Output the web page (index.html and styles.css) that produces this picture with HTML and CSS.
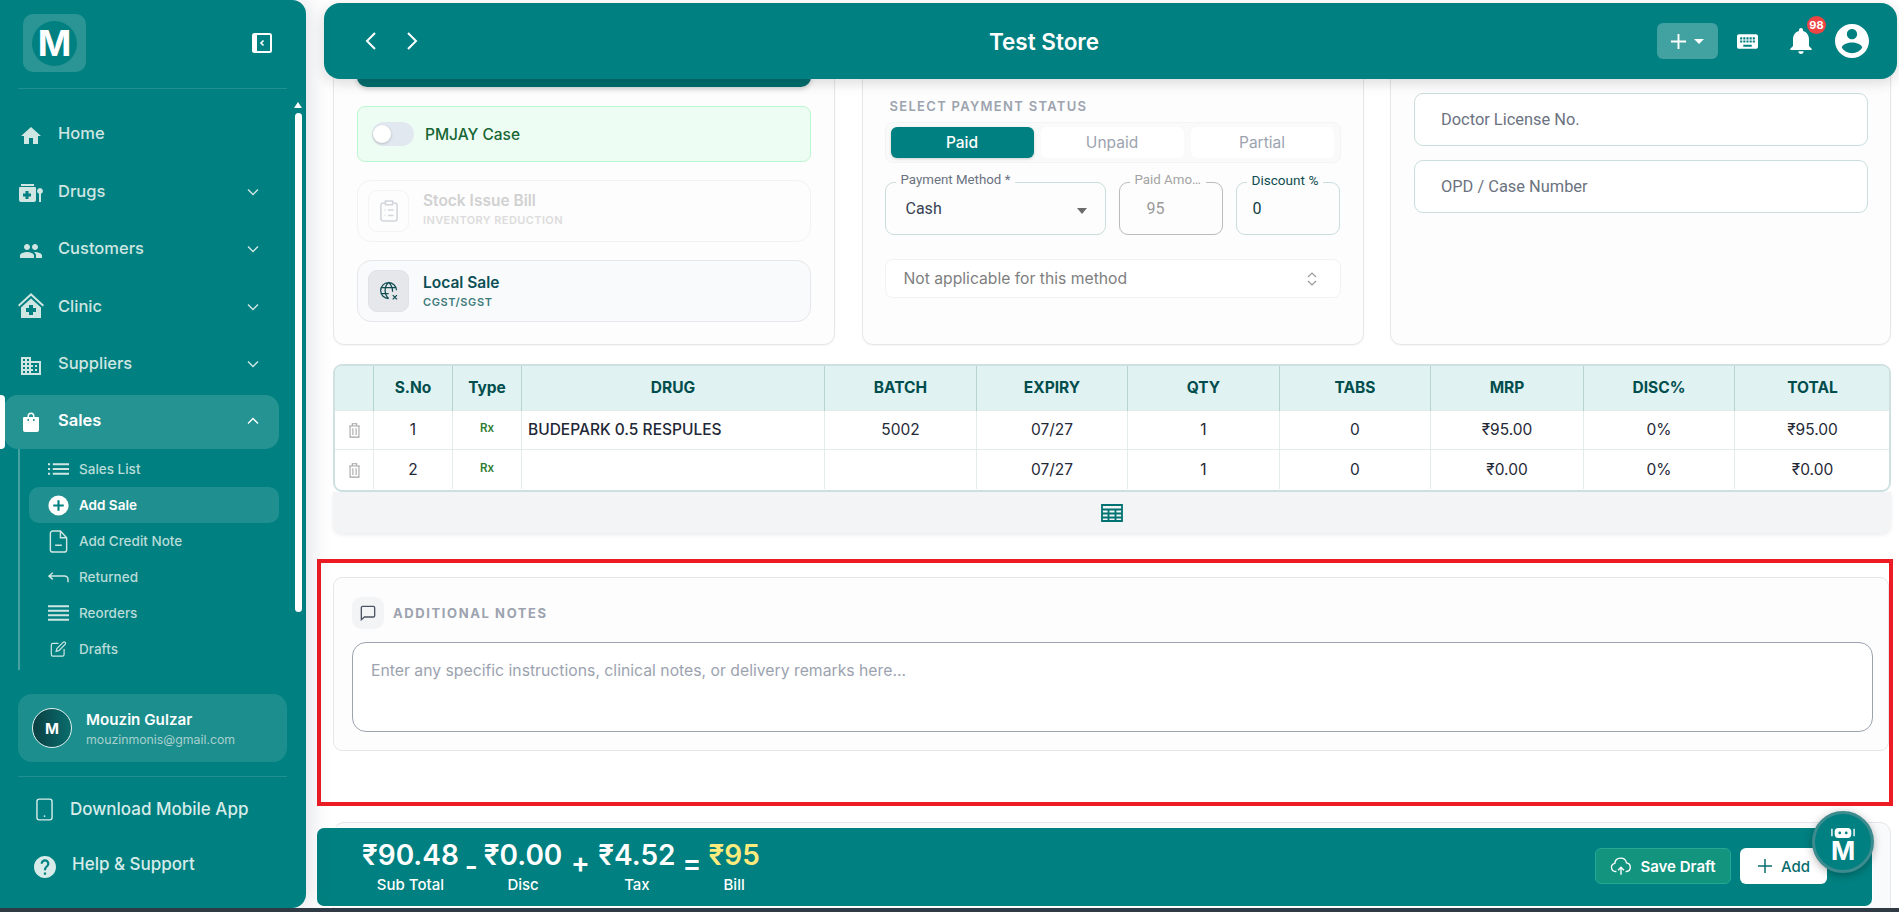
FILE: index.html
```html
<!DOCTYPE html>
<html>

<head>
  <meta charset="UTF-8">
  <title>Add Sale</title>
  <link rel="stylesheet" href="styles.css">
</head>

<body>
  <div class="app">
    <aside class="sidebar">
      <div class="sidebar__top">
        <div class="logo">
          <div class="logo__circle">M</div>
        </div>
        <svg class="sidebar__collapse" viewBox="0 0 20 20">
          <rect x="0" y="0" width="20" height="20" rx="2.5" fill="#fff" />
          <rect x="5" y="2" width="13" height="16" fill="#008080" />
          <path d="M11.5 7.5 9 10l2.5 2.5" fill="none" stroke="#fff" stroke-width="1.6" />
        </svg>
      </div>

      <div class="scroll-arrow"></div>
      <div class="scroll-thumb"></div>

      <nav class="nav">
        <a class="nav__item">
          <svg class="nav__icon" viewBox="0 0 24 24"><path d="M10 20v-6h4v6h5v-8h3L12 3 2 12h3v8z" /></svg>
          <span>Home</span>
        </a>
        <a class="nav__item">
          <svg class="nav__icon" viewBox="0 0 24 24"><path d="M2 3h13v2H2zM1 6h15a1 1 0 0 1 1 1v12a2 2 0 0 1-2 2H2a2 2 0 0 1-2-2V7a1 1 0 0 1 1-1zm5.500 4v2.500H4v3h2.500V18h3v-2.500H12v-3H9.500V10z" fill-rule="evenodd" /><path d="M21 7a3 3 0 0 1 1 5.800V21h-2v-8.200A3 3 0 0 1 21 7z" /></svg>
          <span>Drugs</span>
          <svg class="nav__chevron" viewBox="0 0 12 8"><path d="M1 1.500 6 6.500l5-5" /></svg>
        </a>
        <a class="nav__item">
          <svg class="nav__icon" viewBox="0 0 24 24"><path d="M16 11c1.660 0 2.990-1.340 2.990-3S17.660 5 16 5c-1.660 0-3 1.340-3 3s1.340 3 3 3zm-8 0c1.660 0 2.990-1.340 2.990-3S9.660 5 8 5C6.340 5 5 6.340 5 8s1.340 3 3 3zm0 2c-2.330 0-7 1.170-7 3.500V19h14v-2.500c0-2.330-4.670-3.500-7-3.500zm8 0c-.29 0-.62.02-.97.05 1.160.84 1.970 1.970 1.970 3.450V19h6v-2.500c0-2.330-4.670-3.500-7-3.500z" /></svg>
          <span>Customers</span>
          <svg class="nav__chevron" viewBox="0 0 12 8"><path d="M1 1.500 6 6.500l5-5" /></svg>
        </a>
        <a class="nav__item">
          <svg class="nav__icon nav__icon--big" viewBox="0 0 28 28"><path d="M14 1 1 13l1.300 1.500L14 3.800l11.700 10.700L27 13z" /><path d="M14 6.500 4 15.500V26h20V15.500zm-2 6.500h4v3h3v4h-3v3h-4v-3H9v-4h3z" fill-rule="evenodd" /></svg>
          <span>Clinic</span>
          <svg class="nav__chevron" viewBox="0 0 12 8"><path d="M1 1.500 6 6.500l5-5" /></svg>
        </a>
        <a class="nav__item">
          <svg class="nav__icon" viewBox="0 0 24 24"><path d="M12 7V3H2v18h20V7H12zM6 19H4v-2h2v2zm0-4H4v-2h2v2zm0-4H4V9h2v2zm0-4H4V5h2v2zm4 12H8v-2h2v2zm0-4H8v-2h2v2zm0-4H8V9h2v2zm0-4H8V5h2v2zm10 12h-8v-2h2v-2h-2v-2h2v-2h-2V9h8v10zm-2-8h-2v2h2v-2zm0 4h-2v2h2v-2z" /></svg>
          <span>Suppliers</span>
          <svg class="nav__chevron" viewBox="0 0 12 8"><path d="M1 1.500 6 6.500l5-5" /></svg>
        </a>
        <a class="nav__item nav__item--open">
          <svg class="nav__icon" viewBox="0 0 24 24"><path d="M5 7h3.500V6a3.500 3.500 0 0 1 7 0v1H19a1 1 0 0 1 1 1v12a2 2 0 0 1-2 2H6a2 2 0 0 1-2-2V8a1 1 0 0 1 1-1zm5 0h4V6a2 2 0 0 0-4 0zM8.500 9v2H10V9zm5.500 0v2h1.500V9z" fill-rule="evenodd" /></svg>
          <span>Sales</span>
          <svg class="nav__chevron" viewBox="0 0 12 8"><path d="M1 6.500 6 1.500l5 5" /></svg>
        </a>

        <div class="subnav">
          <a class="subnav__item">
            <svg class="subnav__icon" viewBox="0 0 22 14"><path d="M0 1h2.200v2H0zM5 1h17v2H5zM0 6h2.200v2H0zM5 6h17v2H5zM0 11h2.200v2H0zM5 11h17v2H5z" /></svg>
            <span>Sales List</span>
          </a>
          <a class="subnav__item subnav__item--active">
            <svg class="subnav__icon subnav__icon--add" viewBox="0 0 24 24"><circle cx="12" cy="12" r="11.500" fill="#fff" /><path d="M12 6v12M6 12h12" stroke="#008080" stroke-width="2.400" /></svg>
            <span>Add Sale</span>
          </a>
          <a class="subnav__item">
            <svg class="subnav__icon subnav__icon--line" viewBox="0 0 20 24"><path d="M12 1H4a2.500 2.500 0 0 0-2.500 2.500v17A2.500 2.500 0 0 0 4 23h12a2.500 2.500 0 0 0 2.500-2.500V8zM12 1v7h6.500M6.500 16h7" /></svg>
            <span>Add Credit Note</span>
          </a>
          <a class="subnav__item">
            <svg class="subnav__icon subnav__icon--line" viewBox="0 0 22 12"><path d="M5 1 1 4.500 5 8M1 4.500h16c2.500 0 4 1.500 4 4V11" /></svg>
            <span>Returned</span>
          </a>
          <a class="subnav__item">
            <svg class="subnav__icon" viewBox="0 0 22 16"><path d="M0 0h22v2H0zM0 4.700h22v2H0zM0 9.300h22v2H0zM0 14h22v2H0z" /></svg>
            <span>Reorders</span>
          </a>
          <a class="subnav__item">
            <svg class="subnav__icon subnav__icon--line subnav__icon--drafts" viewBox="0 0 20 20"><path d="M10 3H3a2 2 0 0 0-2 2v12a2 2 0 0 0 2 2h12a2 2 0 0 0 2-2v-7M16 1.500a1.800 1.800 0 0 1 2.500 2.500L10.500 12 7 13l1-3.500z" /></svg>
            <span>Drafts</span>
          </a>
        </div>
      </nav>

      <div class="profile">
        <div class="profile__avatar">M</div>
        <div>
          <div class="profile__name">Mouzin Gulzar</div>
          <div class="profile__mail">mouzinmonis@gmail.com</div>
        </div>
      </div>

      <div class="sidebar__bottom">
        <a class="bottom-link bottom-link--app">
          <svg class="bottom-link__phone" viewBox="0 0 18 24"><rect x="1" y="1" width="16" height="22" rx="2.500" /><circle cx="9" cy="19" r="1" /></svg>
          <span>Download Mobile App</span>
        </a>
        <a class="bottom-link bottom-link--help">
          <svg class="bottom-link__help" viewBox="2 2 20 20"><path d="M12 2C6.480 2 2 6.480 2 12s4.480 10 10 10 10-4.480 10-10S17.520 2 12 2zm1 17h-2v-2h2v2zm2.070-7.750l-.9.92C13.450 12.900 13 13.500 13 15h-2v-.5c0-1.100.45-2.100 1.170-2.830l1.240-1.260c.37-.36.59-.86.59-1.410 0-1.100-.9-2-2-2s-2 .9-2 2H8c0-2.210 1.790-4 4-4s4 1.790 4 4c0 .88-.36 1.680-.93 2.250z" /></svg>
          <span>Help &amp; Support</span>
        </a>
      </div>
    </aside>

    <main class="main">
      <header class="topbar">
        <div class="topbar__arrows">
          <svg viewBox="0 0 12 20"><path d="M10 2 2 10l8 8" /></svg>
          <svg viewBox="0 0 12 20"><path d="M2 2l8 8-8 8" /></svg>
        </div>
        <div class="topbar__title">Test Store</div>
        <div class="topbar__actions">
          <button class="plus-btn">
            <svg viewBox="0 0 18 18"><path d="M9 1v16M1 9h16" /></svg>
            <span class="plus-btn__caret"></span>
          </button>
          <svg class="topbar__keyboard" viewBox="2 5 20 14"><path d="M20 5H4c-1.100 0-1.990.9-1.990 2L2 17c0 1.100.9 2 2 2h16c1.100 0 2-.9 2-2V7c0-1.100-.9-2-2-2zm-9 3h2v2h-2V8zm0 3h2v2h-2v-2zM8 8h2v2H8V8zm0 3h2v2H8v-2zm-1 2H5v-2h2v2zm0-3H5V8h2v2zm9 7H8v-2h8v2zm0-4h-2v-2h2v2zm0-3h-2V8h2v2zm3 3h-2v-2h2v2zm0-3h-2V8h2v2z" /></svg>
          <div class="bell">
            <svg viewBox="4 2.500 16 19.500"><path d="M12 22c1.100 0 2-.9 2-2h-4c0 1.100.89 2 2 2zm6-6v-5c0-3.070-1.640-5.640-4.500-6.320V4c0-.83-.67-1.500-1.500-1.500s-1.500.67-1.500 1.500v.68C7.630 5.360 6 7.920 6 11v5l-2 2v1h16v-1l-2-2z" /></svg>
            <span class="bell__badge">98</span>
          </div>
          <svg class="topbar__avatar" viewBox="2 2 20 20"><path d="M12 2C6.480 2 2 6.480 2 12s4.480 10 10 10 10-4.480 10-10S17.520 2 12 2zm0 3c1.660 0 3 1.340 3 3s-1.340 3-3 3-3-1.340-3-3 1.340-3 3-3zm0 14.200c-2.500 0-4.710-1.280-6-3.220.03-1.990 4-3.080 6-3.080 1.990 0 5.970 1.090 6 3.080-1.290 1.940-3.500 3.220-6 3.220z" /></svg>
        </div>
      </header>

      <div class="content">
        <section class="top-cards">
          <div class="card card--options">
            <div class="dark-btn"></div>
            <div class="pmjay">
              <span class="toggle"></span>
              <span class="pmjay__label">PMJAY Case</span>
            </div>
            <div class="option option--disabled">
              <div class="option__icon">
                <svg viewBox="0 0 20 24"><path d="M6 3H3.500A2.500 2.500 0 0 0 1 5.500v15A2.500 2.500 0 0 0 3.500 23h13a2.500 2.500 0 0 0 2.500-2.500v-15A2.500 2.500 0 0 0 16.500 3H14M6 1h8v4H6zM9 11h6M9 17h6M5 11h1M5 17h1" /></svg>
              </div>
              <div class="option__text">
                <div class="option__title">Stock Issue Bill</div>
                <div class="option__sub">INVENTORY REDUCTION</div>
              </div>
            </div>
            <div class="option option--local">
              <div class="option__icon">
                <svg viewBox="0 0 24 24"><path d="M21 11a9.500 9.500 0 1 0-9.500 10M2.500 8h18M2.500 15h9M11.500 1.500c-5.500 5.500-5.500 14 0 19.500M11.500 1.500c3.500 3.500 5 7.500 4.800 11.500M16.500 17l5 5M21.500 17l-5 5" /></svg>
              </div>
              <div class="option__text">
                <div class="option__title">Local Sale</div>
                <div class="option__sub">CGST/SGST</div>
              </div>
            </div>
          </div>

          <div class="card card--payment">
            <div class="section-label">SELECT PAYMENT STATUS</div>
            <div class="segment">
              <div class="segment__btn segment__btn--on">Paid</div>
              <div class="segment__btn">Unpaid</div>
              <div class="segment__btn">Partial</div>
            </div>
            <div class="pay-fields">
              <div class="field field--method">
                <span class="field__label">Payment Method *</span>
                <span class="field__value">Cash</span>
                <span class="field__caret"></span>
              </div>
              <div class="field field--amount">
                <span class="field__label field__label--muted">Paid Amo…</span>
                <span class="field__value field__value--muted">95</span>
              </div>
              <div class="field field--discount">
                <span class="field__label field__label--dark">Discount %</span>
                <span class="field__value field__value--dark">0</span>
              </div>
            </div>
            <div class="not-applicable">
              <span>Not applicable for this method</span>
              <svg viewBox="0 0 10 16"><path d="M1 6l4-4 4 4M1 10l4 4 4-4" /></svg>
            </div>
          </div>

          <div class="card card--doctor">
            <div class="text-input">Doctor License No.</div>
            <div class="text-input">OPD / Case Number</div>
          </div>
        </section>

        <section class="table-wrap">
          <table class="items">
            <colgroup>
              <col class="col-del">
              <col class="col-sno">
              <col class="col-type">
              <col class="col-drug">
              <col class="col-a">
              <col class="col-b">
              <col class="col-a">
              <col class="col-b">
              <col class="col-c">
              <col class="col-b">
              <col class="col-d">
            </colgroup>
            <thead>
              <tr>
                <th></th>
                <th>S.No</th>
                <th>Type</th>
                <th>DRUG</th>
                <th>BATCH</th>
                <th>EXPIRY</th>
                <th>QTY</th>
                <th>TABS</th>
                <th>MRP</th>
                <th>DISC%</th>
                <th>TOTAL</th>
              </tr>
            </thead>
            <tbody>
              <tr>
                <td><svg class="trash" viewBox="0 0 14 18"><path d="M1 4.500h12M4.500 4V2h5v2M2 4.500V17h10V4.500M5.200 7v7.500M8.800 7v7.500" /></svg></td>
                <td>1</td>
                <td class="rx">Rx</td>
                <td class="drug">BUDEPARK 0.5 RESPULES</td>
                <td>5002</td>
                <td>07/27</td>
                <td>1</td>
                <td>0</td>
                <td>₹95.00</td>
                <td>0%</td>
                <td>₹95.00</td>
              </tr>
              <tr>
                <td><svg class="trash" viewBox="0 0 14 18"><path d="M1 4.500h12M4.500 4V2h5v2M2 4.500V17h10V4.500M5.200 7v7.500M8.800 7v7.500" /></svg></td>
                <td>2</td>
                <td class="rx">Rx</td>
                <td class="drug"></td>
                <td></td>
                <td>07/27</td>
                <td>1</td>
                <td>0</td>
                <td>₹0.00</td>
                <td>0%</td>
                <td>₹0.00</td>
              </tr>
            </tbody>
          </table>
        </section>
        <div class="table-expand">
          <svg viewBox="0 0 22 18"><path d="M1 1h20v16H1zM1 5.500h20M1 9.500h20M1 13.500h20M7.500 5.500V17M14.500 5.500V17" /></svg>
        </div>

        <div class="highlight">
          <section class="notes">
            <div class="notes__head">
              <div class="notes__icon">
                <svg viewBox="0 0 18 18"><path d="M3 1.500h12A1.500 1.500 0 0 1 16.500 3v9a1.500 1.500 0 0 1-1.500 1.500H5L1.500 16.500V3A1.500 1.500 0 0 1 3 1.500z" /></svg>
              </div>
              <span class="notes__title">ADDITIONAL NOTES</span>
            </div>
            <div class="notes__box">Enter any specific instructions, clinical notes, or delivery remarks here...</div>
          </section>
        </div>

        <div class="footer-card">
          <div class="totals">
            <div class="sum">
              <div class="sum__value">₹90.48</div>
              <div class="sum__label">Sub Total</div>
            </div>
            <div class="sum__sign sum__sign--minus">-</div>
            <div class="sum">
              <div class="sum__value">₹0.00</div>
              <div class="sum__label">Disc</div>
            </div>
            <div class="sum__sign">+</div>
            <div class="sum">
              <div class="sum__value">₹4.52</div>
              <div class="sum__label">Tax</div>
            </div>
            <div class="sum__sign sum__sign--equals">=</div>
            <div class="sum">
              <div class="sum__value sum__value--bill">₹95</div>
              <div class="sum__label">Bill</div>
            </div>
            <div class="totals__buttons">
              <button class="btn-draft">
                <svg viewBox="0 0 24 20"><path d="M7 15.500H6a4.500 4.500 0 0 1-.8-8.900A6.500 6.500 0 0 1 18 6a4.800 4.800 0 0 1 0 9.500h-1M12 19v-8M8.800 14 12 10.800 15.200 14" /></svg>
                <span>Save Draft</span>
              </button>
              <button class="btn-add">
                <svg viewBox="0 0 16 16"><path d="M8 1v14M1 8h14" /></svg>
                <span>Add</span>
              </button>
            </div>
          </div>
        </div>
      </div>

      <div class="assistant">
        <svg viewBox="0 0 26 14"><path d="M1 3v8M25 3v8" stroke="#fff" stroke-width="1.500" /><rect x="4" y="2" width="18" height="11" rx="4" fill="#fff" /><circle cx="9.500" cy="7.500" r="1.500" fill="#008080" /><circle cx="16.500" cy="7.500" r="1.500" fill="#008080" /></svg>
        <span>M</span>
      </div>
    </main>
  </div>
</body>

</html>
```

FILE: styles.css
```css
* {
  box-sizing: border-box;
}

body {
  margin: 0;
  height: 912px;
  overflow: hidden;
  background-color: #2f3a44;
  font-family: Inter, "Noto Sans", sans-serif;
  color: #1f2937;
}

a {
  display: flex;
}

.app {
  display: flex;
  height: 908px;
  background-color: #fff;
  overflow: hidden;
}

/* sidebar */
.sidebar {
  position: relative;
  z-index: 3;
  flex: 0 0 306px;
  display: flex;
  flex-direction: column;
  background-color: #008080;
  border-radius: 0 14px 14px 0;
  box-shadow: 4px 0 22px rgba(60, 70, 100, 0.16);
}

.sidebar__top {
  display: flex;
  align-items: center;
  justify-content: space-between;
  height: 89px;
  margin: 0 19px 0 18px;
  padding: 0 15px 2px 5px;
  border-bottom: 1px solid rgba(255, 255, 255, 0.13);
}

.logo {
  display: flex;
  align-items: center;
  justify-content: center;
  width: 63px;
  height: 58px;
  background-color: rgba(255, 255, 255, 0.17);
  border-radius: 10px;
}

.logo__circle {
  display: flex;
  align-items: center;
  justify-content: center;
  width: 45px;
  height: 45px;
  background-color: #008080;
  border-radius: 50%;
  color: #fff;
  font-size: 36px;
  font-weight: 700;
}

.sidebar__collapse {
  width: 20px;
  height: 20px;
}

.scroll-arrow {
  position: absolute;
  top: 102px;
  left: 294px;
  border-left: 4.500px solid transparent;
  border-right: 4.500px solid transparent;
  border-bottom: 6px solid #fff;
}

.scroll-thumb {
  position: absolute;
  top: 113px;
  left: 295px;
  width: 7px;
  height: 499px;
  background-color: #fff;
  border-radius: 4px;
}

.nav {
  padding-top: 18px;
}

.nav__item {
  align-items: center;
  height: 57.500px;
  padding: 0 47px 0 19px;
  gap: 15px;
  color: #cfe6e3;
  font-size: 16.500px;
  font-weight: 500;
}

.nav__item span {
  flex: 1;
  margin-top: -5px;
}

.nav__icon {
  flex: 0 0 24px;
  width: 24px;
  height: 24px;
  fill: #cfe6e3;
}

.nav__icon--big {
  margin-left: -2px;
  margin-right: -2px;
  flex-basis: 28px;
  width: 28px;
  height: 28px;
  margin-top: -4px;
}

.nav__chevron {
  width: 12px;
  height: 8px;
  margin-top: -3px;
  fill: none;
  stroke: #cfe6e3;
  stroke-width: 1.400;
}

.nav__item--open {
  position: relative;
  height: 54px;
  margin: 0.500px 27px 0 4px;
  padding: 0 20px 0 15px;
  background-color: rgba(255, 255, 255, 0.15);
  border-radius: 14px;
  color: #fff;
  font-weight: 600;
}

.nav__item--open::before {
  content: "";
  position: absolute;
  top: 0;
  left: -4px;
  width: 5px;
  height: 54px;
  background-color: #fff;
  border-radius: 0 4px 4px 0;
}

.nav__item--open .nav__icon {
  fill: #fff;
}

.nav__item--open .nav__chevron {
  stroke: #fff;
}

.subnav {
  margin-left: 18px;
  padding: 2px 27px 3px 9px;
  border-left: 2px solid rgba(255, 255, 255, 0.28);
}

.subnav__item {
  align-items: center;
  height: 36px;
  padding-left: 19px;
  gap: 10px;
  border-radius: 10px;
  color: #b9dcd9;
  font-size: 13.500px;
  font-weight: 500;
}

.subnav__item--active {
  background-color: rgba(255, 255, 255, 0.12);
  color: #fff;
  font-weight: 600;
}

.subnav__icon {
  flex: 0 0 21px;
  width: 21px;
  height: 16px;
  fill: #cfe6e3;
}

.subnav__icon--add {
  height: 23px;
  flex-basis: 21px;
}

.subnav__icon--line {
  height: 23px;
  fill: none;
  stroke: #cfe6e3;
  stroke-width: 1.500;
}

.subnav__icon--drafts {
  height: 16px;
}

.profile {
  display: flex;
  align-items: center;
  gap: 14px;
  height: 68px;
  margin: 24px 19px 0 18px;
  padding-left: 14px;
  background-color: rgba(255, 255, 255, 0.11);
  border-radius: 14px;
}

.profile__avatar {
  display: flex;
  align-items: center;
  justify-content: center;
  flex: 0 0 40px;
  height: 40px;
  background: linear-gradient(90deg, #0b3f42, #0a6d6d);
  border: 1px solid #e2f0ef;
  border-radius: 50%;
  color: #fff;
  font-size: 15px;
  font-weight: 700;
}

.profile__name {
  color: #fff;
  font-size: 15.200px;
  font-weight: 600;
}

.profile__mail {
  margin-top: 3px;
  color: #a7d0cd;
  font-size: 12.300px;
}

.sidebar__bottom {
  margin: 14px 19px 0 18px;
  border-top: 1px solid rgba(255, 255, 255, 0.13);
}

.bottom-link {
  align-items: center;
  color: #d7ecea;
  font-size: 17px;
  font-weight: 500;
}

.bottom-link--app {
  height: 64px;
  gap: 17px;
  padding-left: 18px;
}

.bottom-link--help {
  height: 52px;
  gap: 16px;
  padding-left: 16px;
}

.bottom-link--help span {
  margin-top: -6px;
}

.bottom-link__phone {
  width: 17px;
  height: 23px;
  fill: none;
  stroke: #d7ecea;
  stroke-width: 1.500;
}

.bottom-link__phone circle {
  fill: #d7ecea;
  stroke: none;
}

.bottom-link__help {
  width: 22px;
  height: 22px;
  fill: #d7ecea;
}

/* main column */
.main {
  position: relative;
  flex: 1;
  min-width: 0;
}

.topbar {
  position: relative;
  z-index: 2;
  display: flex;
  align-items: center;
  justify-content: space-between;
  height: 76px;
  margin: 3px 2px 0 18px;
  padding: 0 28px 0 41px;
  background-color: #008080;
  border-radius: 16px;
  box-shadow: 0 4px 14px rgba(0, 0, 0, 0.14);
  color: #fff;
}

.topbar__arrows {
  display: flex;
  gap: 29px;
}

.topbar__arrows svg {
  width: 12px;
  height: 20px;
  fill: none;
  stroke: #fff;
  stroke-width: 2;
}

.topbar__title {
  margin-left: 13px;
  font-size: 22.500px;
  font-weight: 600;
}

.topbar__actions {
  display: flex;
  align-items: center;
}

.plus-btn {
  display: flex;
  align-items: center;
  justify-content: center;
  gap: 7px;
  width: 61px;
  height: 36px;
  padding: 0;
  background-color: rgba(255, 255, 255, 0.26);
  border: none;
  border-radius: 6px;
}

.plus-btn svg {
  width: 17px;
  height: 17px;
  fill: none;
  stroke: #fff;
  stroke-width: 2;
}

.plus-btn__caret {
  border-left: 5px solid transparent;
  border-right: 5px solid transparent;
  border-top: 5px solid #fff;
}

.topbar__keyboard {
  width: 21px;
  height: 17px;
  margin-left: 19px;
  fill: #fff;
}

.bell {
  position: relative;
  margin-left: 32px;
  height: 26px;
}

.bell svg {
  width: 22px;
  height: 26px;
  fill: #fff;
}

.bell__badge {
  position: absolute;
  top: -12px;
  left: 17px;
  width: 19px;
  height: 18px;
  background-color: #ef4444;
  border-radius: 50%;
  color: #fff;
  font-size: 11px;
  font-weight: 700;
  line-height: 18px;
  text-align: center;
}

.topbar__avatar {
  width: 34px;
  height: 34px;
  margin-left: 23px;
  fill: #fff;
}

.content {
  padding: 0 8px 0 27px;
}

/* cards under the header */
.top-cards {
  display: grid;
  grid-template-columns: 502px 502px 501px;
  column-gap: 26.500px;
  height: 306px;
  margin-top: -40px;
}

.card {
  background-color: #fdfdfd;
  border: 1px solid #e5e7eb;
  border-radius: 11px;
  box-shadow: 0 1px 2px rgba(0, 0, 0, 0.04);
}

.card--options {
  display: flex;
  flex-direction: column;
  padding: 5px 23px 0 23px;
}

.dark-btn {
  height: 42px;
  background-color: #006e6e;
  border-radius: 10px;
  box-shadow: 0 2px 5px rgba(0, 0, 0, 0.18);
}

.pmjay {
  display: flex;
  align-items: center;
  gap: 11px;
  height: 56px;
  margin-top: 19px;
  padding-left: 14px;
  background-color: #eefdf3;
  border: 1px solid #bbf7d0;
  border-radius: 8px;
}

.toggle {
  position: relative;
  width: 42px;
  height: 24px;
  background-color: #e2e8f0;
  border-radius: 12px;
}

.toggle::after {
  content: "";
  position: absolute;
  top: 3px;
  left: 1px;
  width: 18px;
  height: 18px;
  background-color: #fff;
  border-radius: 50%;
  box-shadow: 0 1px 3px rgba(0, 0, 0, 0.2);
}

.pmjay__label {
  color: #166534;
  font-size: 15.500px;
  font-weight: 500;
}

.option {
  display: flex;
  align-items: center;
  gap: 14px;
  height: 62px;
  padding-left: 10px;
  border: 1px solid #f1f2f4;
  border-radius: 14px;
}

.option--disabled {
  margin-top: 18px;
}

.option--disabled .option__text {
  margin-top: -4px;
}

.option--local {
  margin-top: 18px;
  background-color: #f8fafc;
  border-color: #e5e7eb;
}

.option__icon {
  display: flex;
  align-items: center;
  justify-content: center;
  flex: 0 0 41px;
  height: 42px;
  border: 1px solid #f3f4f6;
  border-radius: 9px;
}

.option__icon svg {
  width: 18px;
  height: 22px;
  fill: none;
  stroke: #d1d5db;
  stroke-width: 1.700;
}

.option--local .option__icon {
  background-color: #e5e7eb;
  border-color: #dfe2e6;
}

.option--local .option__icon svg {
  width: 20px;
  height: 20px;
  stroke: #0f4c4f;
  stroke-width: 1.500;
}

.option__title {
  color: #d1d1d1;
  font-size: 15.500px;
  font-weight: 600;
}

.option__sub {
  margin-top: 3px;
  color: #dcdcdc;
  font-size: 11px;
  font-weight: 600;
  letter-spacing: 0.4px;
}

.option--local .option__title {
  color: #0b4f55;
}

.option--local .option__sub {
  color: #3f7b7b;
  letter-spacing: 0.6px;
}

.card--payment {
  padding: 58px 22px 0;
}

.section-label {
  margin-left: 5px;
  color: #9ca3af;
  font-size: 13px;
  font-weight: 600;
  line-height: 16px;
  letter-spacing: 1.300px;
}

.segment {
  display: grid;
  grid-template-columns: repeat(3, 143px);
  column-gap: 7px;
  height: 41px;
  margin-top: 8px;
  padding: 4px 5px;
  background-color: #fafafb;
  border: 1px solid #f3f4f6;
  border-radius: 8px;
}

.segment__btn {
  background-color: #fff;
  border-radius: 6px;
  color: #9ca3af;
  font-size: 15.500px;
  font-weight: 400;
  line-height: 31px;
  text-align: center;
}

.segment__btn--on {
  background-color: #008080;
  box-shadow: 0 1px 3px rgba(0, 0, 0, 0.18);
  color: #fff;
  font-weight: 500;
}

.pay-fields {
  display: grid;
  grid-template-columns: 221px 104px 104px;
  column-gap: 13px;
  margin-top: 19px;
}

.field {
  position: relative;
  display: flex;
  align-items: center;
  height: 53px;
  padding-left: 20px;
  border: 1px solid #c9dedd;
  border-radius: 9px;
  font-family: Roboto, sans-serif;
}

.field__label {
  position: absolute;
  top: -11px;
  left: 10px;
  padding: 0 5px;
  background-color: #fdfdfd;
  color: #6b7280;
  font-size: 13.300px;
  white-space: nowrap;
}

.field__label--muted {
  color: #a3a3a3;
}

.field__label--dark {
  font-size: 13.600px;
  color: #0f4c4f;
}

.field__value {
  color: #374151;
  font-size: 16px;
}

.field__value--muted {
  margin-left: 7px;
  color: #9a9a9a;
}

.field__value--dark {
  margin-left: -4px;
  color: #0f3d3f;
}

.field__caret {
  position: absolute;
  right: 18px;
  top: 25px;
  border-left: 5.500px solid transparent;
  border-right: 5.500px solid transparent;
  border-top: 6px solid #6b6b6b;
}

.field--amount {
  border-color: #b9bcbc;
}

.not-applicable {
  display: flex;
  align-items: center;
  justify-content: space-between;
  height: 39px;
  margin-top: 24px;
  padding: 0 23px 0 18px;
  background-color: #fff;
  border: 1px solid #f1f2f4;
  border-radius: 8px;
  color: #808080;
  font-size: 15.700px;
}

.not-applicable svg {
  width: 10px;
  height: 16px;
  fill: none;
  stroke: #9a9a9a;
  stroke-width: 1.200;
}

.card--doctor {
  padding: 53px 22px 0 23px;
}

.text-input {
  display: flex;
  align-items: center;
  height: 53px;
  margin-bottom: 14px;
  padding-left: 26px;
  background-color: #fff;
  border: 1px solid #c9dedd;
  border-radius: 9px;
  color: #6b7280;
  font-family: Roboto, sans-serif;
  font-size: 16.400px;
}

/* items table */
.table-wrap {
  height: 128px;
  margin-top: 19px;
  border: 2px solid #cfe0e0;
  border-radius: 9px;
  overflow: hidden;
}

.items {
  width: 1555px;
  border-collapse: collapse;
  table-layout: fixed;
  font-size: 15.500px;
}

.col-del { width: 38.500px; }
.col-sno { width: 79px; }
.col-type { width: 69px; }
.col-drug { width: 303px; }
.col-a { width: 152px; }
.col-b { width: 151px; }
.col-c { width: 153px; }
.col-d { width: 155.500px; }

.items th {
  height: 44px;
  background-color: #e0f2f1;
  border-left: 1px solid #b4d4d2;
  color: #004d4d;
  font-weight: 700;
}

.items th:first-child,
.items td:first-child {
  border-left: none;
}

.items td {
  height: 39.500px;
  padding: 0;
  border-left: 1px solid #e3eceb;
  border-top: 1px solid #e3eceb;
  color: #1f2937;
  text-align: center;
}

.items td.rx {
  padding-bottom: 3px;
  color: #2e7d32;
  font-size: 11.500px;
  font-weight: 600;
}

.items td.drug {
  padding-left: 6px;
  font-weight: 500;
  text-align: left;
}

.trash {
  width: 13px;
  height: 16px;
  margin-top: 5px;
  fill: none;
  stroke: #a3a3a3;
  stroke-width: 1.200;
}

.table-expand {
  display: flex;
  align-items: center;
  justify-content: center;
  height: 41px;
  background-color: #f3f4f6;
  border-radius: 0 0 9px 9px;
  box-shadow: 0 2px 4px rgba(0, 0, 0, 0.08);
}

.table-expand svg {
  width: 22px;
  height: 18px;
  fill: none;
  stroke: #007272;
  stroke-width: 1.800;
}

/* the red box drawn round the notes */
.highlight {
  height: 247px;
  margin: 26px -2px 0 -16px;
  padding: 14px 0 0 12px;
  background-color: #fff;
  border: 4px solid #ed1c24;
}

.notes {
  height: 174px;
  padding: 19px 15px 0 18px;
  background-color: #fdfdfd;
  border: 1px solid #e5e7eb;
  border-radius: 9px;
}

.notes__head {
  display: flex;
  align-items: center;
  gap: 9px;
}

.notes__icon {
  display: flex;
  align-items: center;
  justify-content: center;
  width: 32px;
  height: 32px;
  background-color: #f3f4f6;
  border-radius: 9px;
}

.notes__icon svg {
  width: 16px;
  height: 16px;
  fill: none;
  stroke: #4b5563;
  stroke-width: 1.500;
}

.notes__title {
  color: #9ca3af;
  font-size: 13px;
  font-weight: 700;
  letter-spacing: 1.600px;
}

.notes__box {
  height: 90px;
  margin-top: 13px;
  padding: 18px 18px;
  background-color: #fff;
  border: 1px solid #9ca3af;
  border-radius: 14px;
  color: #9ca3af;
  font-size: 15.750px;
}

/* totals bar */
.footer-card {
  height: 90px;
  margin-top: 16px;
  padding-top: 5px;
  background-color: #f9fafb;
  border: 1px solid #e5e7eb;
  border-radius: 11px 11px 0 0;
}

.totals {
  display: flex;
  align-items: flex-start;
  width: 1555px;
  height: 78px;
  margin-left: -17px;
  padding: 9px 45px 0 45px;
  background-color: #008080;
  border-radius: 7px;
  box-shadow: 0 0 0 1px #fff;
  color: #fff;
}

.sum {
  text-align: center;
}

.sum__value {
  font-size: 28px;
  font-weight: 600;
  line-height: 36px;
}

.sum__value--bill {
  color: #fdeb7d;
}

.sum__label {
  margin-top: 2px;
  font-size: 15px;
  font-weight: 500;
}

.sum__sign {
  width: 36px;
  margin-top: 8px;
  font-size: 28px;
  font-weight: 600;
  line-height: 36px;
  text-align: center;
}

.sum__sign--minus {
  width: 25px;
  margin-top: 11px;
}

.sum__sign--equals {
  width: 33px;
}

.totals__buttons {
  display: flex;
  gap: 9px;
  margin: 11px 0 0 auto;
}

.btn-draft,
.btn-add {
  display: flex;
  align-items: center;
  justify-content: center;
  gap: 8px;
  height: 36px;
  padding: 0;
  border-radius: 6px;
  font-family: Inter, sans-serif;
  font-size: 15px;
  font-weight: 600;
}

.btn-draft {
  width: 136px;
  background-color: #12947f;
  border: 1px solid #25a896;
  color: #fff;
}

.btn-draft svg {
  width: 22px;
  height: 19px;
  fill: none;
  stroke: #fff;
  stroke-width: 1.500;
}

.btn-add {
  justify-content: flex-start;
  width: 87px;
  padding-left: 17px;
  background-color: #fff;
  border: none;
  color: #0a6d6d;
  font-weight: 500;
}

.btn-add svg {
  width: 16px;
  height: 16px;
  fill: none;
  stroke: #0a6d6d;
  stroke-width: 1.500;
}

/* chat bubble, floats above the totals bar */
.assistant {
  position: absolute;
  top: 811px;
  left: 1506px;
  z-index: 4;
  display: flex;
  flex-direction: column;
  align-items: center;
  justify-content: center;
  width: 62px;
  height: 62px;
  padding-top: 3px;
  background-color: #008080;
  border: 3px solid #3c8c8f;
  border-radius: 50%;
  box-shadow: 0 2px 8px rgba(0, 0, 0, 0.3);
  color: #fff;
  font-size: 26px;
  font-weight: 700;
  line-height: 23px;
}

.assistant svg {
  width: 24px;
  height: 13px;
}
```
